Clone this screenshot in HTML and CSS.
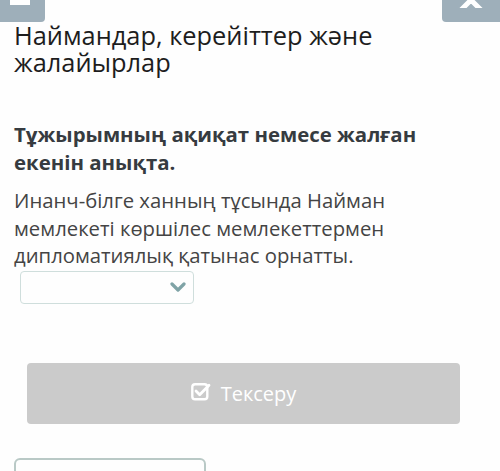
FILE: index.html
```html
<!DOCTYPE html>
<html lang="kk">
<head>
<meta charset="utf-8">
<link rel="stylesheet" href="styles.css">
</head>
<body>
<div class="page">
  <div class="topbar">
    <div class="tb-btn tb-left"><span class="tb-square"></span></div>
    <div class="tb-btn tb-right">
      <svg width="30" height="8" viewBox="0 0 30 8"><path d="M5 -10 L15 0 L25 -10 M5 10 L15 0 L25 10" stroke="#fff" stroke-width="5" fill="none" stroke-linecap="round"/></svg>
    </div>
  </div>
  <h1 class="title">Наймандар, керейіттер және жалайырлар</h1>
  <p class="question">Тұжырымның ақиқат немесе жалған екенін анықта.</p>
  <p class="statement">Инанч-білге ханның тұсында Найман мемлекеті көршілес мемлекеттермен дипломатиялық қатынас орнатты.</p>
  <div class="select">
    <svg class="chev" width="16" height="11" viewBox="0 0 16 11"><path d="M2 2 L8 8 L14 2" stroke="#7fa3a6" stroke-width="3.2" fill="none" stroke-linecap="round" stroke-linejoin="round"/></svg>
  </div>
  <div class="check-wrap">
    <button class="check-btn">
      <svg width="20" height="19" viewBox="0 0 20 19"><rect x="1.3" y="2.3" width="15" height="15" rx="2.8" fill="none" stroke="#fff" stroke-width="2.4"/><path d="M5 9 L8.7 12.7 L18 3.2" stroke="#fff" stroke-width="2.8" fill="none" stroke-linecap="round" stroke-linejoin="round"/></svg>
      <span>Тексеру</span>
    </button>
  </div>
  <div class="bottom-box"></div>
</div>
</body>
</html>
```
FILE: styles.css
```css
html, body {
  margin: 0;
  padding: 0;
  background: #fefefe;
  overflow: hidden;
}
.page {
  width: 500px;
  height: 471px;
  position: relative;
  font-family: "Open Sans", "Noto Sans", sans-serif;
  overflow: hidden;
}
.topbar {
  display: flex;
  justify-content: space-between;
  height: 22px;
}
.tb-btn {
  background: #9eafba;
  height: 22px;
  display: flex;
  justify-content: center;
}
.tb-left {
  width: 45px;
  border-radius: 0 0 4px 0;
}
.tb-square {
  width: 20px;
  height: 5px;
  background: #fff;
  margin-left: -5px;
}
.tb-right {
  width: 58px;
  border-radius: 0 0 0 4px;
}
.title {
  margin: 0;
  padding: 0 40px 0 14px;
  font-size: 25.4px;
  font-weight: 400;
  line-height: 27px;
  color: #1d1d1d;
}
.question {
  margin: 44px 0 0;
  padding: 0 40px 0 14px;
  font-size: 20.4px;
  font-weight: 700;
  line-height: 28px;
  color: #363b40;
}
.statement {
  margin: 11px 0 0;
  padding: 0 40px 0 14px;
  font-size: 20.3px;
  line-height: 27.5px;
  color: #444;
}
.select {
  margin: 1px 0 0 20px;
  width: 174px;
  height: 33px;
  box-sizing: border-box;
  border: 1.5px solid #cfdedc;
  border-radius: 4px;
  display: flex;
  justify-content: flex-end;
  align-items: center;
  padding-right: 7px;
}
.check-wrap {
  padding: 59px 40px 0 27px;
}
.check-btn {
  width: 433px;
  height: 61px;
  border: none;
  border-radius: 4px;
  background: #cbcbcb;
  color: #fff;
  font-family: "Open Sans", "Noto Sans", sans-serif;
  font-size: 20px;
  display: flex;
  justify-content: center;
  align-items: center;
  gap: 10px;
  padding: 0;
}
.check-btn svg {
  margin-top: -3px;
}
.bottom-box {
  margin: 34px 0 0 14px;
  width: 192px;
  height: 40px;
  box-sizing: border-box;
  border: 2px solid #b9c9c6;
  border-radius: 6px;
}
```
